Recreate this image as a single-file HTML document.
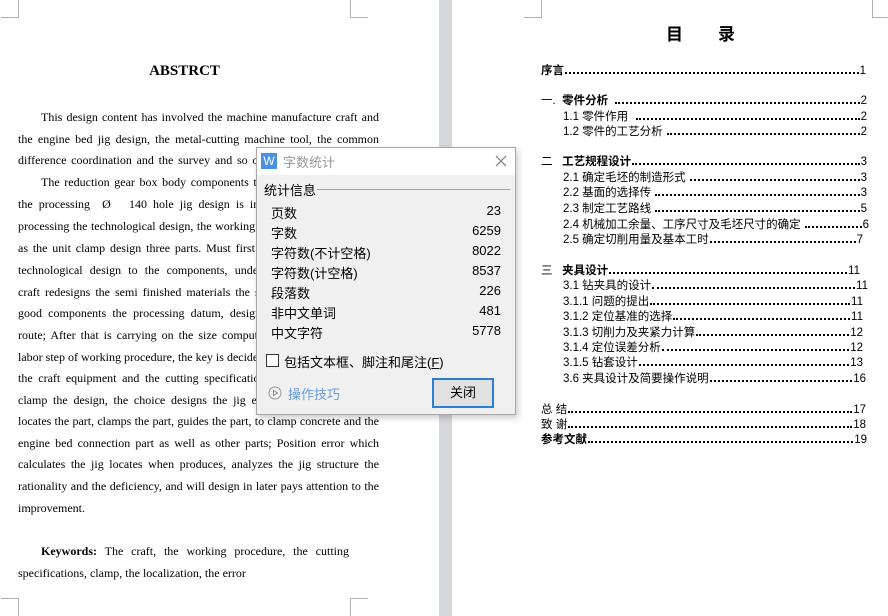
<!DOCTYPE html>
<html><head><meta charset="utf-8">
<style>
*{margin:0;padding:0;box-sizing:border-box}
html,body{width:888px;height:616px;overflow:hidden;background:#fff}
body{position:relative;font-family:"Liberation Serif","Noto Serif CJK SC",serif;color:#000}
.gap{position:absolute;left:439px;top:0;width:13px;height:616px;background:#d6d7d9}
.mk{position:absolute;border-color:#b0b0b0;border-style:solid;border-width:0}
.ln{position:absolute;left:18px;width:361px;font-size:12px;line-height:16px;white-space:nowrap;text-align:justify;text-align-last:justify;overflow:hidden}
.ln.last{text-align-last:left}
.ind{left:41px;width:338px}
.toc{position:absolute;display:flex;align-items:flex-end;font-family:"Liberation Sans","Noto Sans CJK SC",sans-serif;font-size:11.5px;line-height:14px;white-space:nowrap}
.toc .f{flex:1;border-bottom:2px dotted #000;margin:0 1px 4px 1px;height:2px}
.b{font-weight:bold}
.dlg{position:absolute;left:256px;top:147px;width:260px;height:268px;background:#f0f0f0;border:1px solid #a8a8a8;box-shadow:2px 3px 6px rgba(0,0,0,.2);font-family:"Liberation Sans","Noto Sans CJK SC",sans-serif;font-size:12px}
.tb{height:27px;background:#fff;position:relative}
.row{position:absolute;left:14px;width:230px;display:flex;justify-content:space-between;font-size:13px}
</style></head><body>
<div class="mk" style="left:1px;top:0;width:18px;height:18px;border-right-width:1px;border-bottom-width:1px"></div>
<div class="mk" style="left:350px;top:0;width:18px;height:18px;border-left-width:1px;border-bottom-width:1px"></div>
<div class="mk" style="left:1px;top:598px;width:18px;height:18px;border-right-width:1px;border-top-width:1px"></div>
<div class="mk" style="left:350px;top:598px;width:18px;height:18px;border-left-width:1px;border-top-width:1px"></div>
<div class="mk" style="left:524px;top:0;width:18px;height:18px;border-right-width:1px;border-bottom-width:1px"></div>
<div class="mk" style="left:872px;top:0;width:18px;height:18px;border-left-width:1px;border-bottom-width:1px"></div>
<div class="gap"></div>

<div style="position:absolute;left:0;width:369px;top:63px;text-align:center;font-weight:bold;font-size:15px">ABSTRCT</div>

<div class="ln ind" style="top:109px">This design content has involved the machine manufacture craft and</div>
<div class="ln" style="top:131px">the engine bed jig design, the metal-cutting machine tool, the common</div>
<div class="ln" style="top:152px">difference coordination and the survey and so on the aspect knowledge.</div>
<div class="ln ind" style="top:174px">The reduction gear box body components technological design, and</div>
<div class="ln" style="top:196px">the processing &nbsp;Ø&nbsp;&nbsp; 140 hole jig design is included, the components</div>
<div class="ln" style="top:218px">processing the technological design, the working procedure design as well</div>
<div class="ln" style="top:240px">as the unit clamp design three parts. Must first carry on the analysis of</div>
<div class="ln" style="top:262px">technological design to the components, understands the components</div>
<div class="ln" style="top:284px">craft redesigns the semi finished materials the structure, and selects the</div>
<div class="ln" style="top:305px">good components the processing datum, designs the components craft</div>
<div class="ln" style="top:327px">route; After that is carrying on the size computation to the components</div>
<div class="ln" style="top:349px">labor step of working procedure, the key is decides each working procedure</div>
<div class="ln" style="top:370px">the craft equipment and the cutting specifications; Then carries on the</div>
<div class="ln" style="top:392px">clamp the design, the choice designs the jig each composition part, if</div>
<div class="ln" style="top:413px">locates the part, clamps the part, guides the part, to clamp concrete and the</div>
<div class="ln" style="top:435px">engine bed connection part as well as other parts; Position error which</div>
<div class="ln" style="top:456px">calculates the jig locates when produces, analyzes the jig structure the</div>
<div class="ln" style="top:478px">rationality and the deficiency, and will design in later pays attention to the</div>
<div class="ln last" style="top:500px">improvement.</div>
<div class="ln ind" style="top:543px;width:308px"><b>Keywords:</b> The craft, the working procedure, the cutting</div>
<div class="ln last" style="top:565px">specifications, clamp, the localization, the error</div>

<div style="position:absolute;left:666px;top:22px;font-family:'Noto Sans CJK SC',sans-serif;font-weight:bold;font-size:17px;line-height:22px">目</div>
<div style="position:absolute;left:718px;top:22px;font-family:'Noto Sans CJK SC',sans-serif;font-weight:bold;font-size:17px;line-height:22px">录</div>

<div class="toc" style="left:541px;width:325px;top:64px"><span class="b">序言</span><span class="f"></span><span>1</span></div>
<div class="toc" style="left:541px;width:326px;top:94px"><span>一.&nbsp; <b>零件分析</b>&nbsp;&nbsp;</span><span class="f"></span><span>2</span></div>
<div class="toc" style="left:563px;width:304px;top:110px"><span>1.1 零件作用&nbsp;&nbsp;</span><span class="f"></span><span>2</span></div>
<div class="toc" style="left:563px;width:304px;top:125px"><span>1.2 零件的工艺分析&nbsp;</span><span class="f"></span><span>2</span></div>
<div class="toc" style="left:541px;width:326px;top:155px"><span>二&nbsp;&nbsp; <b>工艺规程设计</b></span><span class="f"></span><span>3</span></div>
<div class="toc" style="left:563px;width:304px;top:171px"><span>2.1 确定毛坯的制造形式&nbsp;</span><span class="f"></span><span>3</span></div>
<div class="toc" style="left:563px;width:304px;top:186px"><span>2.2 基面的选择传&nbsp;</span><span class="f"></span><span>3</span></div>
<div class="toc" style="left:563px;width:304px;top:202px"><span>2.3 制定工艺路线&nbsp;</span><span class="f"></span><span>5</span></div>
<div class="toc" style="left:563px;width:306px;top:218px"><span>2.4 机械加工余量、工序尺寸及毛坯尺寸的确定&nbsp;</span><span class="f"></span><span>6</span></div>
<div class="toc" style="left:563px;width:300px;top:233px"><span>2.5 确定切削用量及基本工时</span><span class="f"></span><span>7</span></div>
<div class="toc" style="left:541px;width:319px;top:264px"><span>三&nbsp;&nbsp; <b>夹具设计</b></span><span class="f"></span><span>11</span></div>
<div class="toc" style="left:563px;width:305px;top:279px"><span>3.1 钻夹具的设计</span><span class="f"></span><span>11</span></div>
<div class="toc" style="left:563px;width:300px;top:295px"><span>3.1.1 问题的提出</span><span class="f"></span><span>11</span></div>
<div class="toc" style="left:563px;width:300px;top:310px"><span>3.1.2 定位基准的选择</span><span class="f"></span><span>11</span></div>
<div class="toc" style="left:563px;width:300px;top:326px"><span>3.1.3 切削力及夹紧力计算</span><span class="f"></span><span>12</span></div>
<div class="toc" style="left:563px;width:300px;top:341px"><span>3.1.4 定位误差分析</span><span class="f"></span><span>12</span></div>
<div class="toc" style="left:563px;width:300px;top:356px"><span>3.1.5 钻套设计</span><span class="f"></span><span>13</span></div>
<div class="toc" style="left:563px;width:303px;top:372px"><span>3.6 夹具设计及简要操作说明</span><span class="f"></span><span>16</span></div>
<div class="toc" style="left:541px;width:325px;top:403px"><span>总 结</span><span class="f"></span><span>17</span></div>
<div class="toc" style="left:541px;width:325px;top:418px"><span>致 谢</span><span class="f"></span><span>18</span></div>
<div class="toc" style="left:541px;width:326px;top:433px"><span class="b">参考文献</span><span class="f"></span><span>19</span></div>

<div class="dlg">
 <div class="tb">
  <div style="position:absolute;left:4px;top:5px;width:16px;height:16px;background:#4a90e2;color:#fff;font-size:12px;line-height:16px;text-align:center;font-family:'Liberation Sans',sans-serif">W</div>
  <div style="position:absolute;left:26px;top:4px;color:#999;font-size:13px">字数统计</div>
  <svg style="position:absolute;left:238px;top:7px" width="12" height="12"><path d="M1 1L11 11M11 1L1 11" stroke="#777" stroke-width="1.2"/></svg>
 </div>
 <div style="position:absolute;left:7px;top:32px;font-size:13px">统计信息</div>
 <div style="position:absolute;left:60px;top:41px;width:193px;height:1px;background:#a0a0a0"></div>
 <div class="row" style="top:55px"><span>页数</span><span>23</span></div>
 <div class="row" style="top:75px"><span>字数</span><span>6259</span></div>
 <div class="row" style="top:95px"><span>字符数(不计空格)</span><span>8022</span></div>
 <div class="row" style="top:115px"><span>字符数(计空格)</span><span>8537</span></div>
 <div class="row" style="top:135px"><span>段落数</span><span>226</span></div>
 <div class="row" style="top:155px"><span>非中文单词</span><span>481</span></div>
 <div class="row" style="top:175px"><span>中文字符</span><span>5778</span></div>
 <div style="position:absolute;left:9px;top:206px;width:13px;height:13px;border:1px solid #333;background:#fff"></div>
 <div style="position:absolute;left:27px;top:204px;font-size:13px">包括文本框、脚注和尾注(<u>F</u>)</div>
 <svg style="position:absolute;left:11px;top:238px" width="14" height="14"><circle cx="7" cy="7" r="6" fill="none" stroke="#999" stroke-width="1"/><path d="M5.5 4.5L9.5 7L5.5 9.5Z" fill="none" stroke="#888"/></svg>
 <div style="position:absolute;left:31px;top:236px;color:#6a9be0;font-size:13px">操作技巧</div>
 <div style="position:absolute;left:175px;top:230px;width:62px;height:30px;border:2px solid #2a7fd4;background:#e1e1e1;text-align:center;line-height:26px;font-size:13px">关闭</div>
</div>
</body></html>
